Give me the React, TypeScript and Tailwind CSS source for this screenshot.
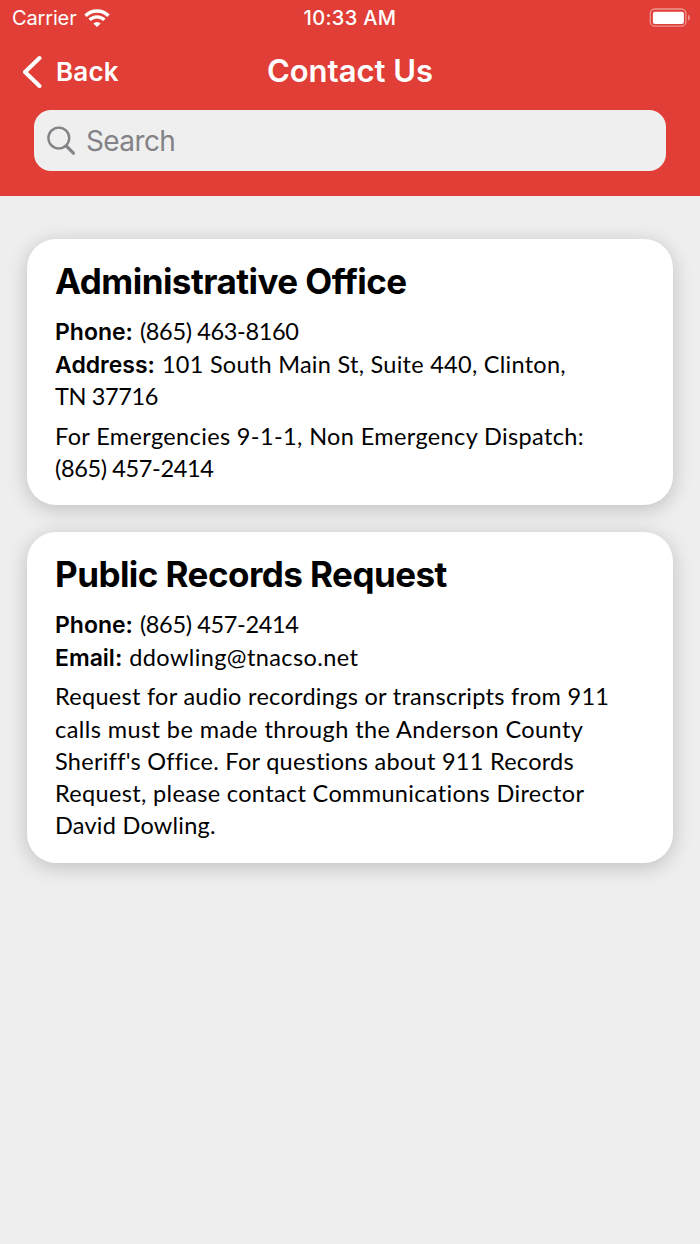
import type { ReactNode } from "react";

interface Line {
    label?: string;
    text: string;
    className: string;
}

interface Contact {
    title: string;
    cardClass: string;
    details: Line[];
    notes: Line[];
}

const contacts: Contact[] = [{
    title: "Administrative Office",
    cardClass: "h-[266px]",
    details: [
        { label: "Phone:", text: "(865) 463-8160", className: "tracking-[-0.36px]" },
        { label: "Address:", text: "101 South Main St, Suite 440, Clinton,", className: "tracking-[0.27px]" },
        { text: "TN 37716", className: "tracking-[-0.36px]" }
    ],
    notes: [
        { text: "For Emergencies 9-1-1, Non Emergency Dispatch:", className: "tracking-[0.37px]" },
        { text: "(865) 457-2414", className: "tracking-[-0.36px]" }
    ]
},
{
    title: "Public Records Request",
    cardClass: "h-[331px]",
    details: [
        { label: "Phone:", text: "(865) 457-2414", className: "tracking-[-0.36px]" },
        { label: "Email:", text: "ddowling@tnacso.net", className: "tracking-[0.4px]" }
    ],
    notes: [
        { text: "Request for audio recordings or transcripts from 911", className: "tracking-[0.29px]" },
        { text: "calls must be made through the Anderson County", className: "tracking-[0.42px]" },
        { text: "Sheriff's Office. For questions about 911 Records", className: "tracking-[0.28px]" },
        { text: "Request, please contact Communications Director", className: "tracking-[0.34px]" },
        { text: "David Dowling.", className: "tracking-[0.25px]" }
    ]
}
];

function WifiIcon() {
    return (
        <svg width="26" height="19" viewBox="0 0 26 19" fill="none" stroke="white" strokeWidth="3.4">
            <path d="M1.5 6.7a16.3 16.3 0 0 1 23 0" />
            <path d="M5.6 10.9a10.5 10.5 0 0 1 14.8 0" />
            <path d="M13 18l-3.7-3.6a5.3 5.3 0 0 1 7.4 0z" fill="white" stroke="none" />
        </svg>
    );
}

function BatteryIcon() {
    return (
        <svg width="42" height="20" viewBox="0 0 42 20">
            <rect x="1.3" y="1" width="35.6" height="17.2" rx="4.5" fill="none" stroke="white" strokeOpacity="0.45" strokeWidth="1.3" />
            <rect x="3.9" y="3.7" width="31" height="12.3" rx="2" fill="white" />
            <path d="M39.2 6.8c2.2 1 2.2 5 0 6z" fill="white" fillOpacity="0.5" />
        </svg>
    );
}

function StatusBar() {
    return (
        <div className="grid grid-cols-3 h-9 items-center text-[20px] leading-9">
            <div className="flex items-center pl-3">
                <span className="w-[72px] whitespace-nowrap tracking-[-0.15px]">Carrier</span>
                <WifiIcon />
            </div>
            <span className="text-center font-medium tracking-[0.35px]">10:33 AM</span>
            <div className="flex justify-end pr-[9px]">
                <BatteryIcon />
            </div>
        </div>
    );
}

function Row({ children, className = "" }: { children: ReactNode; className?: string }) {
    return <div className={`h-[32.3px] leading-[32px] whitespace-nowrap ${className}`}>{children}</div>;
}

function ContactCard({ contact }: { contact: Contact }) {
    return (
        <section className={`rounded-[29px] bg-white px-7 pt-[21px] shadow-[0_4px_20px_rgba(0,0,0,0.2)] ${contact.cardClass}`}>
            <h2 className="font-['Inter',sans-serif] text-[35px] font-bold leading-[42px] tracking-[-0.54px] whitespace-nowrap">
                {contact.title}
            </h2>
            <div className="mt-[13px] text-[23.5px]">
                {contact.details.map((line) => (
                    <Row key={line.text} className="first:mb-[0.7px]">
                        {line.label && (
                            <span className="mr-[7px] font-['Inter',sans-serif] text-[23px] font-semibold">{line.label}</span>
                        )}
                        <span className={line.className}>{line.text}</span>
                    </Row>
                ))}
            </div>
            <div className="mt-[7px] text-[23.5px]">
                {contact.notes.map((line) => (
                    <Row key={line.text} className={line.className}>{line.text}</Row>
                ))}
            </div>
        </section>
    );
}

export default function App() {
    return (
        <div className="min-h-[1244px] w-[700px] overflow-hidden bg-[#eeeeee] font-['Lato',sans-serif] text-black">
            <header className="h-[196px] bg-[#e03e36] font-['Inter',sans-serif] text-white">
                <StatusBar />
                <div className="grid h-[74px] grid-cols-3 items-center">
                    <button className="flex items-center pl-[22px] pb-[3px] text-left">
                        <svg width="20" height="34" viewBox="0 0 20 34" fill="none" stroke="white" strokeWidth="4" strokeLinecap="round" strokeLinejoin="round">
                            <path d="M17.5 3L3 17l14.5 14" />
                        </svg>
                        <span className="ml-[14px] text-[26px] font-semibold leading-[34px] tracking-[0.2px]">Back</span>
                    </button>
                    <h1 className="pb-1 text-center text-[31px] font-semibold leading-10 whitespace-nowrap">Contact Us</h1>
                </div>
                <div className="mx-[34px] flex h-[61px] items-center rounded-[17px] bg-[#efefef] pl-[13px] text-[#838387]">
                    <svg width="29" height="30" viewBox="0 0 29 30" fill="none" stroke="currentColor" strokeLinecap="round">
                        <circle cx="11.8" cy="12" r="10.4" strokeWidth="2.4" />
                        <path d="M19.4 20.2l7 7" strokeWidth="3.2" />
                    </svg>
                    <span className="ml-[10px] text-[28px] leading-10 tracking-[-0.6px]">Search</span>
                </div>
            </header>
            <main className="flex flex-col gap-[27px] px-[27px] pt-[43px]">
                {contacts.map((contact) => (
                    <ContactCard key={contact.title} contact={contact} />
                ))}
            </main>
        </div>
    );
}
